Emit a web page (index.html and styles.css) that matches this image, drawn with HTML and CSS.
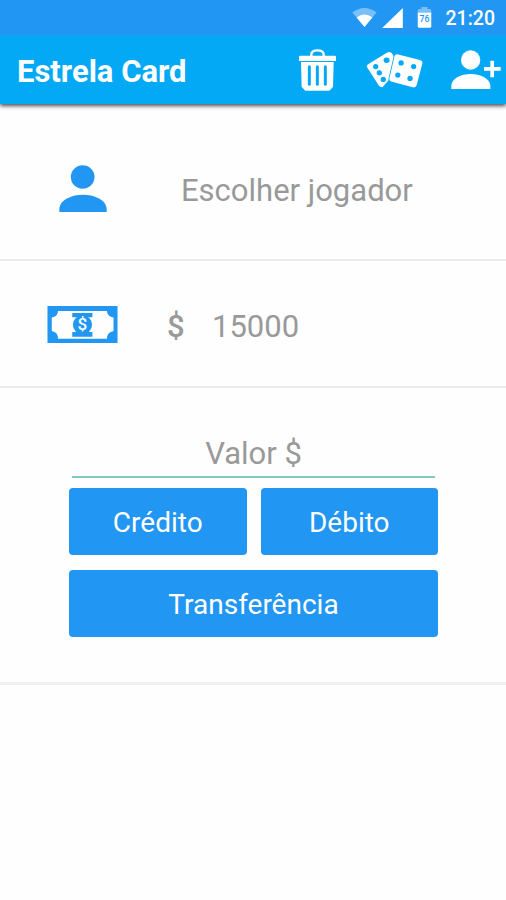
FILE: index.html
```
<!DOCTYPE html>
<html lang="pt-BR">
<head>
    <meta charset="UTF-8">
    <meta name="viewport" content="width=device-width, initial-scale=1.0">
    <title>Estrela Card</title>
    <link rel="stylesheet" href="styles.css">
</head>
<body>
    <div class="status-bar">
        <svg class="wifi" viewBox="36 24 74 58">
            <path d="M36 38 Q73 10 110 38 L73 82 Z" fill="#fff" opacity="0.4"/>
            <path d="M49 53 Q73 35 97 53 L73 82 Z" fill="#fff"/>
        </svg>
        <svg class="signal" viewBox="126 22 62 60">
            <path d="M188 22 V82 H126 Z" fill="#fff"/>
        </svg>
        <svg class="battery" viewBox="230 22 44 62">
            <path d="M232 40 V32 Q232 28 237 28 H243 V22 H261 V28 H267 Q272 28 272 32 V40 Z" fill="#fff" opacity="0.4"/>
            <path d="M232 39 H272 V79 Q272 83 268 83 H236 Q232 83 232 79 Z" fill="#fff"/>
            <text x="252" y="65" text-anchor="middle">76</text>
        </svg>
        <span class="clock">21:20</span>
    </div>

    <header class="toolbar">
        <h1>Estrela Card</h1>
        <svg class="icon-trash" viewBox="27 37 111 126">
            <path d="M64 59 V54 Q64 41 82 41 Q101 41 101 54 V59" fill="none" stroke="#fff" stroke-width="7"/>
            <path d="M31 57 H134 Q138 57 138 61 V73 H27 V61 Q27 57 31 57 Z" fill="#fff"/>
            <path d="M33 76 H131 L129 151 L118 162 H46 L35 151 Z" fill="#fff"/>
            <path d="M58 90 V143 M82 90 V143 M106 90 V143" stroke="#03a9f4" stroke-width="9" stroke-linecap="round"/>
        </svg>
        <svg class="icon-dice" viewBox="227 44 172 112">
            <g fill="#fff">
                <path d="M234 83 L290 49 Q301 43 307 54 L314 66 L296 132 L277 153 Q270 155 265 148 L230 93 Q228 87 234 83 Z"/>
                <path class="die-front" d="M321 54 L390 71 Q400 74 397 83 L380 148 Q377 156 368 154 L303 136 Q295 133 298 125 L313 60 Q315 53 321 54 Z"/>
            </g>
            <g fill="#03a9f4">
                <ellipse cx="289" cy="72" rx="9" ry="8"/>
                <circle cx="256" cy="91" r="8"/>
                <circle cx="267" cy="110" r="8"/>
                <circle cx="279" cy="130" r="8"/>
                <circle cx="333" cy="80" r="8"/>
                <circle cx="371" cy="91" r="8"/>
                <circle cx="323" cy="117" r="8"/>
                <circle cx="360" cy="127" r="8"/>
            </g>
        </svg>
        <svg class="icon-add" viewBox="483 41 148 117">
            <g fill="#fff">
                <circle cx="541" cy="71" r="29"/>
                <path d="M483 158 V148 C484 126 513 113 541 113 C569 113 599 126 600 148 V158 Z"/>
                <path d="M600 73 H611 V92 H631 V103 H611 V123 H600 V103 H581 V92 H600 Z"/>
            </g>
        </svg>
    </header>

    <main>
        <section class="row player">
            <svg class="icon-person" viewBox="86 45 144 141">
                <circle cx="157" cy="81" r="35.5"/>
                <path d="M87 186 V174 C91 148 125 134 158 134 C191 134 225 148 229 174 V186 Z"/>
            </svg>
            <span class="player-name">Escolher jogador</span>
        </section>

        <section class="row balance">
            <svg class="icon-bill" viewBox="52 45 212 112">
                <path fill-rule="evenodd" d="M52 45 H264 V157 H52 Z M84 60 Q84 76 65 80 V121 Q84 125 84 144 H232 Q232 125 252 121 V80 Q232 76 232 60 Z"/>
                <path d="M127 66 H188 V79 H127 Z M127 124 H188 V138 H127 Z"/>
                <circle cx="158" cy="102" r="29"/>
                <text x="158" y="119" text-anchor="middle">$</text>
            </svg>
            <span class="currency">$</span>
            <span class="amount">15000</span>
        </section>

        <section class="actions">
            <input type="text" class="value" placeholder="Valor $">
            <div class="buttons">
                <button type="button">Crédito</button>
                <button type="button">Débito</button>
                <button type="button" class="wide">Transferência</button>
            </div>
        </section>
    </main>
</body>
</html>
```
FILE: styles.css
```
* {
    box-sizing: border-box;
    margin: 0;
    padding: 0;
}

body {
    font-family: Roboto, "Liberation Sans", sans-serif;
    background-color: #fefefe;
    min-height: 100vh;
    overflow: hidden;
}

svg {
    display: block;
    flex-shrink: 0;
}

.status-bar {
    display: flex;
    align-items: center;
    justify-content: flex-end;
    position: relative;
    z-index: 1;
    height: 35px;
    padding-right: 11px;
    background-color: #2196f3;
    color: #fff;
}

.wifi {
    width: 25px;
    height: 19px;
    margin-right: 5px;
}

.signal {
    width: 21px;
    height: 20px;
    margin-right: 14px;
}

.battery {
    width: 15px;
    height: 21px;
    margin-right: 14px;
}

.battery text {
    font-size: 26px;
    font-weight: 500;
    fill: #2196f3;
}

.clock {
    padding-top: 1px;
    font-size: 19.5px;
    font-weight: 500;
    line-height: 35px;
}

.toolbar {
    display: flex;
    align-items: center;
    height: 69px;
    padding: 0 5px 0 17px;
    background-color: #03a9f4;
    color: #fff;
    box-shadow: 0 2px 4px rgba(0, 0, 0, 0.7);
}

.toolbar h1 {
    flex: 1;
    padding-top: 3px;
    font-size: 31px;
    font-weight: 700;
    white-space: nowrap;
}

.icon-trash {
    width: 37px;
    height: 42px;
    margin-right: 30px;
}

.icon-dice {
    width: 57px;
    height: 37px;
    margin-right: 28px;
}

.die-front {
    stroke: #03a9f4;
    stroke-width: 5;
    paint-order: stroke;
}

.icon-add {
    width: 50px;
    height: 39px;
}

.row {
    display: flex;
    align-items: center;
    border-bottom: 2px solid #ebebeb;
    color: #999;
    font-size: 31px;
}

.row span {
    padding-top: 4px;
}

.player {
    height: 157px;
    padding: 14px 0 0 59px;
}

.icon-person {
    width: 48px;
    height: 47px;
    margin-right: 74px;
    fill: #2196f3;
}

.balance {
    height: 127px;
    padding: 1px 0 0 47px;
}

.icon-bill {
    width: 71px;
    height: 37px;
    margin-right: 49px;
    fill: #2196f3;
}

.icon-bill text {
    font-size: 52px;
    font-weight: 500;
    fill: #fff;
}

.currency {
    width: 45px;
    font-weight: 500;
}

.actions {
    height: 297px;
    padding: 45px 68px 0 69px;
    border-bottom: 3px solid #f0f0f0;
}

.value {
    display: block;
    width: 363px;
    height: 45px;
    margin: 0 auto 10px 3px;
    padding-bottom: 3px;
    border: none;
    border-bottom: 2px solid #80cbc4;
    outline: none;
    background: none;
    font-family: inherit;
    font-size: 31px;
    text-align: center;
    color: #999;
}

.value::placeholder {
    color: #999;
}

.buttons {
    display: grid;
    grid-template-columns: 1fr 1fr;
    gap: 15px 14px;
}

.buttons button {
    height: 67px;
    padding-top: 2px;
    border: none;
    border-radius: 4px;
    background-color: #2196f3;
    color: #fff;
    font-family: inherit;
    font-size: 28px;
    cursor: pointer;
}

.buttons .wide {
    grid-column: span 2;
}
```
